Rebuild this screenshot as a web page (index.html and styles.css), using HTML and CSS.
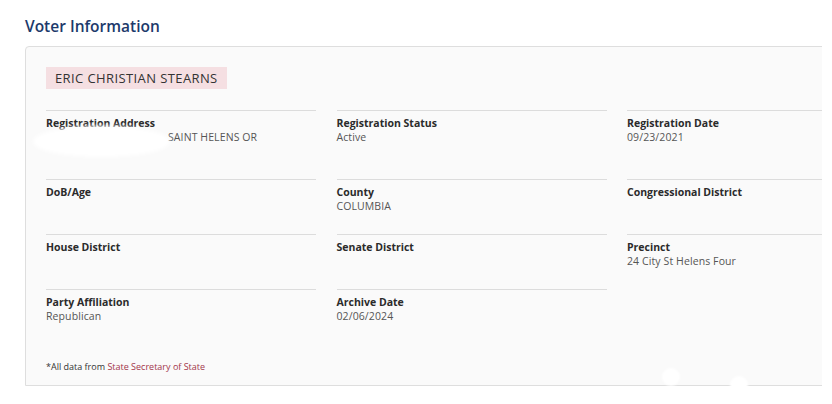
FILE: index.html
```html
<!DOCTYPE html>
<html>
<head>
<meta charset="utf-8">
<link rel="stylesheet" href="styles.css">
</head>
<body>
<div class="page">
  <h1 class="title">Voter Information</h1>
  <div class="card">
    <div class="name">ERIC CHRISTIAN STEARNS</div>
    <div class="grid">
      <div class="cell">
        <div class="label">Registration Address</div>
        <div class="value addr"><span class="redact"></span><span class="city">SAINT HELENS OR</span><br>&nbsp;</div>
      </div>
      <div class="cell">
        <div class="label">Registration Status</div>
        <div class="value">Active</div>
      </div>
      <div class="cell">
        <div class="label">Registration Date</div>
        <div class="value">09/23/2021</div>
      </div>
      <div class="cell">
        <div class="label">DoB/Age</div>
        <div class="value">&nbsp;</div>
      </div>
      <div class="cell">
        <div class="label">County</div>
        <div class="value">COLUMBIA</div>
      </div>
      <div class="cell">
        <div class="label">Congressional District</div>
        <div class="value">&nbsp;</div>
      </div>
      <div class="cell">
        <div class="label">House District</div>
        <div class="value">&nbsp;</div>
      </div>
      <div class="cell">
        <div class="label">Senate District</div>
        <div class="value">&nbsp;</div>
      </div>
      <div class="cell">
        <div class="label">Precinct</div>
        <div class="value">24 City St Helens Four</div>
      </div>
      <div class="cell">
        <div class="label">Party Affiliation</div>
        <div class="value">Republican</div>
      </div>
      <div class="cell">
        <div class="label">Archive Date</div>
        <div class="value">02/06/2024</div>
      </div>
    </div>
    <p class="note">*All data from <span class="src">State Secretary of State</span></p>
    <span class="dot dot1"></span>
    <span class="dot dot2"></span>
  </div>
</div>
</body>
</html>
```
FILE: styles.css
```css
html, body {
  margin: 0;
  padding: 0;
  background: #ffffff;
}
body {
  font-family: "Open Sans", "DejaVu Sans", sans-serif;
  color: #333;
}
.page {
  width: 822px;
  overflow: hidden;
  padding-left: 25px;
  box-sizing: border-box;
  height: 404px;
}
.title {
  margin: 0;
  padding-top: 16px;
  height: 30px;
  font-size: 15.5px;
  line-height: 20px;
  font-weight: 600;
  color: #1d3a6b;
}
.card {
  position: relative;
  width: 900px;
  height: 340px;
  box-sizing: border-box;
  background: #fafafa;
  border: 1px solid #dedede;
  border-radius: 4px 0 0 0;
  padding: 20px 0 0 20px;
}
.name {
  width: fit-content;
  background: #f5dfe2;
  color: #333;
  font-size: 13px;
  line-height: 22px;
  height: 22px;
  padding: 0 9px;
  letter-spacing: 0.4px;
}
.grid {
  margin-top: 21px;
  display: grid;
  grid-template-columns: 270px 270px 270px;
  column-gap: 20.5px;
}
.cell {
  border-top: 1px solid #dcdcdc;
  padding-top: 5px;
  padding-bottom: 21px;
}
.label {
  font-size: 10.5px;
  line-height: 14px;
  font-weight: 700;
  color: #2b2b2b;
}
.value {
  font-size: 10.5px;
  line-height: 14px;
  color: #555;
  letter-spacing: 0.1px;
}
.addr {
  position: relative;
}
.city {
  margin-left: 122px;
}
.redact {
  position: absolute;
  left: -13px;
  top: -4px;
  width: 137px;
  height: 31px;
  border-radius: 50%;
  background: #ffffff;
  filter: blur(2px);
}
.note {
  margin: 17px 0 0;
  font-size: 9px;
  line-height: 12px;
  color: #333;
}
.src {
  color: #a3364a;
}
.dot {
  position: absolute;
  width: 18px;
  height: 18px;
  border-radius: 50%;
  background: #fff;
  filter: blur(1px);
}
.dot1 { left: 636px; top: 321px; }
.dot2 { left: 704px; top: 329px; }
```
